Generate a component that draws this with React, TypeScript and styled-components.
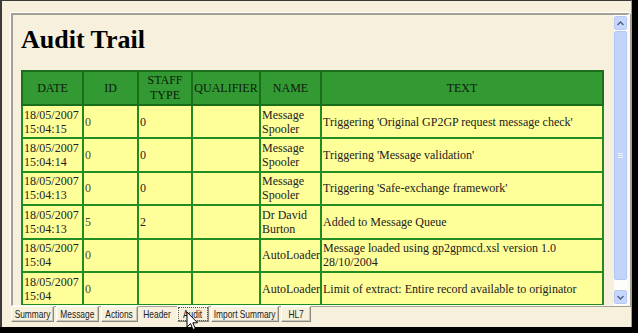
import React from "react";
import styled, { createGlobalStyle } from "styled-components";

const GlobalStyle = createGlobalStyle`
  html, body {
    margin: 0;
    padding: 0;
    background: #000;
    overflow: hidden;
  }
`;

interface AuditRow {
  date: string;
  time: string;
  id: string;
  staffType: string;
  qualifier: string;
  name: string;
  text: string;
}

const rows: AuditRow[] = [
  {
    date: "18/05/2007",
    time: "15:04:15",
    id: "0",
    staffType: "0",
    qualifier: "",
    name: "Message Spooler",
    text: "Triggering 'Original GP2GP request message check'",
  },
  {
    date: "18/05/2007",
    time: "15:04:14",
    id: "0",
    staffType: "0",
    qualifier: "",
    name: "Message Spooler",
    text: "Triggering 'Message validation'",
  },
  {
    date: "18/05/2007",
    time: "15:04:13",
    id: "0",
    staffType: "0",
    qualifier: "",
    name: "Message Spooler",
    text: "Triggering 'Safe-exchange framework'",
  },
  {
    date: "18/05/2007",
    time: "15:04:13",
    id: "5",
    staffType: "2",
    qualifier: "",
    name: "Dr David Burton",
    text: "Added to Message Queue",
  },
  {
    date: "18/05/2007",
    time: "15:04",
    id: "0",
    staffType: "",
    qualifier: "",
    name: "AutoLoader",
    text: "Message loaded using gp2gpmcd.xsl version 1.0 28/10/2004",
  },
  {
    date: "18/05/2007",
    time: "15:04",
    id: "0",
    staffType: "",
    qualifier: "",
    name: "AutoLoader",
    text: "Limit of extract: Entire record available to originator",
  },
];

const tabs = [
  { label: "Summary", width: 43 },
  { label: "Message", width: 43 },
  { label: "Actions", width: 37 },
  { label: "Header", width: 35, plain: true },
  { label: "Audit", width: 32, focused: true },
  { label: "Import Summary", width: 68 },
  { label: "HL7", width: 30 },
];

const Cursor = () => (
  <CursorBox>
    <svg width="13" height="20" viewBox="0 0 13 20">
      <path
        d="M1 1 L1 16 L4.5 12.5 L7 18.5 L9.3 17.5 L6.8 11.8 L11.5 11.8 Z"
        fill="#fff"
        stroke="#000"
        strokeWidth="1"
        strokeLinejoin="round"
      />
    </svg>
  </CursorBox>
);

const App = () => {
  return (
    <>
      <GlobalStyle />
      <Screen>
        <Window>
          <Panel>
            <Content>
              <Title>Audit Trail</Title>
              <Table>
                <colgroup>
                  <col style={{ width: 61 }} />
                  <col style={{ width: 55 }} />
                  <col style={{ width: 54 }} />
                  <col style={{ width: 68 }} />
                  <col style={{ width: 61 }} />
                  <col />
                </colgroup>
                <thead>
                  <tr>
                    <Th>DATE</Th>
                    <Th>ID</Th>
                    <Th>
                      STAFF
                      <br />
                      TYPE
                    </Th>
                    <Th>QUALIFIER</Th>
                    <Th>NAME</Th>
                    <Th>TEXT</Th>
                  </tr>
                </thead>
                <tbody>
                  {rows.map((row, i) => (
                    <tr key={i}>
                      <Td>
                        {row.date}
                        <br />
                        {row.time}
                      </Td>
                      <Td $muted>{row.id}</Td>
                      <Td>{row.staffType}</Td>
                      <Td>{row.qualifier}</Td>
                      <Td>{row.name}</Td>
                      <Td>{row.text}</Td>
                    </tr>
                  ))}
                </tbody>
              </Table>
            </Content>
            <Scrollbar>
              <ArrowButton>
                <svg width="7" height="5" viewBox="0 0 7 5">
                  <path d="M0.5 4 L3.5 1 L6.5 4" fill="none" stroke="#4d6185" strokeWidth="1.4" />
                </svg>
              </ArrowButton>
              <Thumb>
                <Grip>
                  <span />
                  <span />
                  <span />
                </Grip>
              </Thumb>
              <Track />
              <ArrowButton>
                <svg width="7" height="5" viewBox="0 0 7 5">
                  <path d="M0.5 1 L3.5 4 L6.5 1" fill="none" stroke="#4d6185" strokeWidth="1.4" />
                </svg>
              </ArrowButton>
            </Scrollbar>
          </Panel>
          <TabBar>
            {tabs.map((tab) => (
              <Tab key={tab.label} $width={tab.width} $plain={tab.plain}>
                {tab.focused ? (
                  <Focus>
                    <TabLabel>{tab.label}</TabLabel>
                  </Focus>
                ) : (
                  <TabLabel>{tab.label}</TabLabel>
                )}
              </Tab>
            ))}
          </TabBar>
          <Cursor />
        </Window>
      </Screen>
    </>
  );
};

export default App;

const Screen = styled.div`
  width: 638px;
  height: 333px;
  background: #000;
`;

const Window = styled.div`
  position: relative;
  box-sizing: border-box;
  width: 632px;
  height: 327px;
  padding: 12px 1px 0 9px;
  background: #f6f0dc;
  border-left: 2px solid #3a3a3a;
  border-top: 1px solid #3a3a3a;
  border-right: 1px solid #a09e94;
  display: flex;
  flex-direction: column;
`;

const Panel = styled.div`
  box-sizing: border-box;
  height: 293px;
  display: flex;
  border-top: 2px solid #a3a196;
  border-left: 2px solid #a3a196;
  border-right: 3px solid #fbf8ee;
  border-bottom: 1px solid #fbf8ee;
  box-shadow: -1px -1px 0 #fff, 1px 1px 0 #a3a196;
`;

const Content = styled.div`
  flex: 1;
  overflow: hidden;
  padding: 10px 0 0 8px;
`;

const Title = styled.h1`
  margin: 0 0 15px;
  font-family: "Liberation Serif", "Times New Roman", serif;
  font-size: 26px;
  line-height: 30px;
  font-weight: bold;
  color: #000;
`;

const Table = styled.table`
  width: 583px;
  border-collapse: collapse;
  table-layout: fixed;
  font-family: "Liberation Serif", "Times New Roman", serif;
  font-size: 12px;
  line-height: 14px;
  border: 2px solid #1f7a1f;
`;

const Th = styled.th`
  height: 30px;
  padding: 1px 0;
  background: #339933;
  border: 2px solid #1a6e1a;
  font-weight: normal;
  color: #0c1a0c;
  text-align: center;
  vertical-align: middle;
  line-height: 15px;
  white-space: nowrap;
`;

const Td = styled.td<{ $muted?: boolean }>`
  height: 29.4px;
  padding: 1px 0 1px 1px;
  background: #ffff99;
  border: 2px solid #228b22;
  color: ${(p) => (p.$muted ? "#4a4a2e" : "#222")};
  text-align: left;
  vertical-align: middle;
  overflow: hidden;
`;

const Scrollbar = styled.div`
  width: 13px;
  display: flex;
  flex-direction: column;
  padding: 1px 0;
  background: #fff;
`;

const ArrowButton = styled.div`
  height: 14px;
  box-sizing: border-box;
  display: flex;
  align-items: center;
  justify-content: center;
  background: #c6d6fc;
  border: 1px solid #b6c8f4;
  border-radius: 2px;
`;

const Thumb = styled.div`
  flex: 1;
  margin-top: 1px;
  box-sizing: border-box;
  display: flex;
  align-items: center;
  justify-content: center;
  background: #c3d4fc;
  border: 1px solid #b2c6f5;
  border-radius: 2px;
`;

const Grip = styled.div`
  display: flex;
  flex-direction: column;
  gap: 1px;

  span {
    display: block;
    width: 5px;
    height: 1px;
    background: #eef3ff;
  }
`;

const Track = styled.div`
  height: 10px;
  background: #fdfdfb;
`;

const TabBar = styled.div`
  display: flex;
  gap: 2px;
`;

const Tab = styled.div<{ $width: number; $plain?: boolean }>`
  box-sizing: border-box;
  width: ${(p) => p.$width}px;
  height: 16px;
  display: flex;
  align-items: center;
  justify-content: center;
  font-family: "Liberation Sans", Arial, sans-serif;
  font-size: 11px;
  color: #222;
  white-space: nowrap;
  border: 1px solid ${(p) => (p.$plain ? "transparent" : "#fff")};
  border-right-color: ${(p) => (p.$plain ? "transparent" : "#8c8a80")};
  border-bottom-color: ${(p) => (p.$plain ? "transparent" : "#8c8a80")};
  box-shadow: ${(p) => (p.$plain ? "none" : "inset -1px -1px 0 #c9c6b8")};
  overflow: visible;
`;

const TabLabel = styled.span`
  display: inline-block;
  transform: scaleX(0.76);
  transform-origin: center;
`;

const Focus = styled.span`
  display: flex;
  justify-content: center;
  width: 28px;
  border: 1px dotted #555;
`;

const CursorBox = styled.div`
  position: absolute;
  left: 184px;
  top: 310px;
  width: 13px;
  height: 20px;
  pointer-events: none;
`;
